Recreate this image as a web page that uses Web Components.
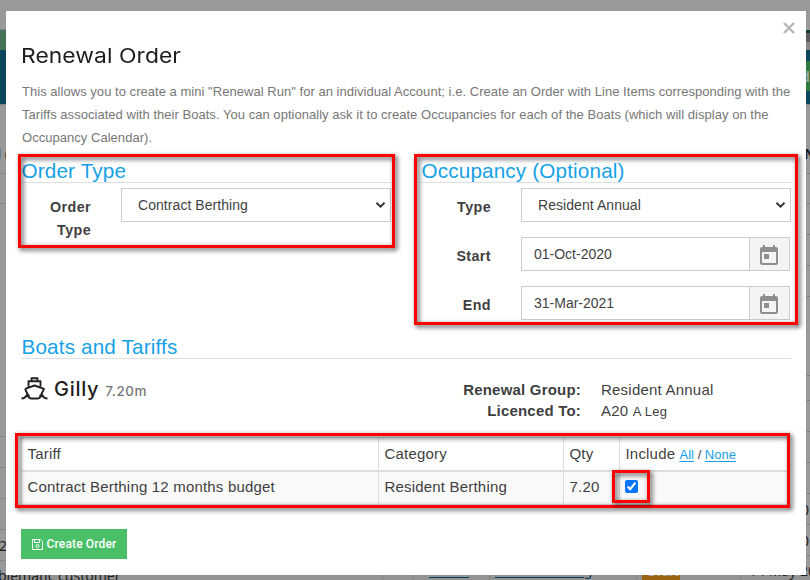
<!DOCTYPE html>
<html lang="en">
<head>
<meta charset="utf-8">
<title>Renewal Order</title>
<style>
html,body{margin:0;height:100%;overflow:hidden;background:#999}
body{font-family:"Liberation Sans",Arial,sans-serif;color:#3f3f3f}
</style>
</head>
<body>
<renewal-app></renewal-app>
<script>
const define=(name,html,setup)=>customElements.define(name,class extends HTMLElement{
  constructor(){
    super();
    const t=document.createElement('template');
    t.innerHTML=html;
    this.attachShadow({mode:'open'}).append(t.content.cloneNode(true));
  }
  connectedCallback(){ if(setup) setup(this,this.shadowRoot); }
});

/* dimmed page behind the dialog */
define('page-backdrop',`<style>
:host{position:absolute;inset:0;overflow:hidden;background:#999;z-index:0}
div,span{position:absolute;white-space:nowrap}
.l{left:0;width:6px;height:1px;background:#858585}
.r{right:0;width:4px;height:1px;background:#808080}
.v{top:575px;width:1px;height:5px;background:#858585}
span{font-size:14px;line-height:16px;color:#1f1f1f;font-family:"Noto Sans","Open Sans",sans-serif}
.u{color:#0b4058;text-decoration:underline;text-underline-offset:2px}
</style>
<div style="left:0;top:30px;width:6px;height:20px;background:#467159"></div>
<div style="right:0;top:30px;width:4px;height:20px;background:linear-gradient(#123e2b 0 3px,#5c5c60 3px 12px,#8a8588 12px)"></div>
<div style="left:0;right:0;top:50px;height:54px;background:#0a465c"></div>
<div style="right:0;top:61px;width:4px;height:30px;background:#2e7a3f"></div>
<span style="left:801px;top:69px;color:#a5a5a5;font-weight:600">d</span>
<div style="left:0;top:29px;width:6px;height:1px;background:#868686"></div>
<div style="left:0;right:0;top:104px;height:1px;background:#828282"></div>
<span style="left:-3px;top:146px;font-weight:700">l (</span>
<span style="left:804px;top:146px;font-weight:700">N</span>
<div id="rows"></div>
<span style="left:-1px;top:538px">2</span>
<span style="left:801px;top:502px">0</span>
<span style="left:801px;top:533px">0</span>
<div style="left:0;right:0;top:575px;height:5px;background:#939393"></div>
<div class="v" style="left:382px"></div><div class="v" style="left:413px"></div><div class="v" style="left:489px"></div><div class="v" style="left:636px"></div><div class="v" style="left:740px"></div>
<span style="left:-2px;top:568px">blematic customer</span>
<span class="u" style="left:429px;top:562px">76543</span>
<span class="u" style="left:495px;top:562px;letter-spacing:-.35px">Visitor Berthing</span>
<div style="left:642px;top:575px;width:38px;height:5px;background:#9a6413"></div>
<span style="left:648px;top:564px;font-size:12px;color:#aaa;font-weight:700">Draft</span>
<span style="left:749px;top:563px">14 May 20</span>`,(h,r)=>{
  const box=r.getElementById('rows');box.style.cssText='inset:0';
  for(const y of [173,203,436,467,498,529,560])box.insertAdjacentHTML('beforeend',`<div class="l" style="top:${y}px"></div>`);
  for(const y of [173,203,234,265,296,375,400,431,462,493,524,555])box.insertAdjacentHTML('beforeend',`<div class="r" style="top:${y}px"></div>`);
});

define('modal-dialog',`<style>
:host{position:absolute;left:6px;top:11px;width:800px;height:564px;box-sizing:border-box;padding:31px 15px 0;background:#fff;z-index:1}
button{position:absolute;right:9px;top:9px;width:16px;height:16px;padding:0;border:0;background:none}
svg{display:block;width:16px;height:16px}
</style><button aria-label="Close"><svg viewBox="0 0 16 16"><path d="M3 3l10 10M13 3l-10 10" stroke="#b8b8b8" stroke-width="2.400" fill="none"/></svg></button><slot></slot>`);

define('modal-title',`<style>
:host{display:block;height:38px}
h1{margin:0;font:400 20.500px/28px Inter,sans-serif;letter-spacing:.05px;color:#1d1d1d;white-space:nowrap;transform:scaleX(1.115);transform-origin:0 0}
</style><h1><slot></slot></h1>`);

define('intro-text',`<style>
:host{display:block;height:80px;font-size:13px;line-height:23px;letter-spacing:.035px;color:#777;white-space:nowrap}
::slotted(p){padding-left:1px}
</style><slot></slot>`);

define('section-title',`<style>
:host{display:block;height:22px;border-bottom:1px solid #e0e0e0;margin-bottom:5px}
h2{margin:0;padding-left:.500px;font:400 20.700px/22px "Liberation Sans",Arial,sans-serif;letter-spacing:.15px;color:#16a1e7;white-space:nowrap}
</style><h2><slot></slot></h2>`);

define('form-row',`<style>
:host{display:grid;grid-template-columns:70px 270px;column-gap:30px;height:49px}
label{font-weight:700;font-size:14.300px;line-height:23px;letter-spacing:.4px;text-align:right;padding-top:8px;color:#3f3f3f}
</style><label></label><slot></slot>`,(h,r)=>{r.querySelector('label').textContent=h.getAttribute('label')});

define('select-box',`<style>
:host{display:flex;align-items:center;justify-content:space-between;box-sizing:border-box;width:270px;height:34px;border:1px solid #ccc;padding:0 4px 0 16px;font-size:14px;letter-spacing:.06px;color:#3f3f3f;background:#fff}
svg{width:11px;height:8px}
</style><span><slot></slot></span><svg viewBox="0 0 11 8"><path d="M1.500 1.800L5.500 5.600L9.500 1.800" fill="none" stroke="#333" stroke-width="2"/></svg>`);

define('date-box',`<style>
:host{display:flex;box-sizing:border-box;width:269px;height:34px;border:1px solid #ccc;font-size:14px;color:#3f3f3f;background:#fff}
span{flex:1;padding-left:12px;line-height:32px}
div{width:39px;border-left:1px solid #ccc;background:#f4f4f4;display:flex;align-items:center;justify-content:center}
svg{width:18px;height:20px;margin:2px 2px 0 0}
</style><span><slot></slot></span><div><svg viewBox="0 0 18 20"><path fill="#8f8f8f" fill-rule="evenodd" d="M3 0h2v2h8V0h2v2h1q2 0 2 2v14q0 2-2 2H2q-2 0-2-2V4q0-2 2-2h1zM2 7v11h14V7zM4 9h5v5H4z"/></svg></div>`);

define('boat-head',`<style>
:host{display:grid;grid-template-columns:1fr 118px 190px;column-gap:20px;height:73px}
.n{display:flex;align-items:baseline;padding-top:10px;font-family:Inter,sans-serif;white-space:nowrap}
svg{width:27px;height:23px;align-self:flex-start;margin:3px 6px 0 0}
b{font-weight:500;font-size:20px;line-height:30px;letter-spacing:.7px;color:#1d1d1d}
small{font-size:13.500px;color:#777;margin-left:6px;letter-spacing:.55px;font-weight:500}
.k,.v{font-size:15px;line-height:21px;padding-top:15px;white-space:nowrap}
.k{font-weight:700;text-align:right;letter-spacing:.2px;display:flex;flex-direction:column;align-items:flex-end}
.v{letter-spacing:.22px}
i{font-style:normal;font-size:13px}
</style>
<div class="n"><svg viewBox="0 0 27 23"><g fill="none" stroke="#222" stroke-width="1.900"><path d="M10.500 4V1.200h6V4M7.500 9.500V4.200h12v5.300M4 11.800L13.500 8.500L23 11.800L20 18L18.500 19.500M4 11.800L7 18L8.500 19.500" stroke-linejoin="round"/><path d="M.5 21.500q3.500 0 5.500-3.500q2.300 3.500 4.500 3.500h6q2.200 0 4.500-3.500q2 3.500 5.500 3.500"/></g></svg><b>Gilly</b><small>7.20m</small></div>
<div class="k"><span>Renewal Group:</span><span>Licenced To:</span></div>
<div class="v"><div>Resident Annual</div><div>A20 <i>A Leg</i></div></div>`);

define('tariff-table',`<style>
:host{display:block;width:767px;height:92px}
.g{display:grid;grid-template-columns:357px 185px 56px 168px;border-left:1px solid #ddd;font-size:15px;letter-spacing:.19px}
.g>div{box-sizing:border-box;padding-left:5.500px;border-right:1px solid #ddd;white-space:nowrap}
.h>div{height:33px;line-height:31px;border-top:1px solid #ddd}
.h{border-bottom:2px solid #ddd}
.d{background:#f9f9f9;border-bottom:1px solid #ddd}
.d>div{height:32px;line-height:30px}
.q{font-size:13px;letter-spacing:0}
a{color:#16a1e7;text-decoration:underline;text-underline-offset:2px}
input{width:13px;height:13px;margin:8px 0 0 -.500px;display:block}
</style>
<div class="g h"><div>Tariff</div><div>Category</div><div>Qty</div><div>Include <span class="q"><a>All</a> / <a>None</a></span></div></div>
<div class="g d"><div>Contract Berthing 12 months budget</div><div>Resident Berthing</div><div>7.20</div><div><input type="checkbox" checked></div></div>`);

define('save-button',`<style>
:host{display:flex;align-items:center;justify-content:center;box-sizing:border-box;width:106px;height:30px;background:#49bf67;color:#fff;font:500 12px/30px Roboto,sans-serif;letter-spacing:.15px;white-space:nowrap}
svg{width:11px;height:11px;margin-right:4px}
</style><svg viewBox="0 0 11 11"><path d="M.5.500h8l2 2v8H.500zM2.500.500v3h5v-3" fill="none" stroke="#fff"/><circle cx="5.500" cy="7" r="1.500" fill="none" stroke="#fff"/></svg><slot></slot>`);

/* red annotation frame */
define('mark-box',`<style>
:host{position:absolute;box-sizing:border-box;border:3px solid #fe0000;filter:drop-shadow(2px 2px 2.500px rgba(0,0,0,.75));z-index:2;pointer-events:none}
</style>`,h=>{
  const [x,y,w,t]=h.getAttribute('box').split(' ');
  h.style.cssText=`left:${x}px;top:${y}px;width:${w}px;height:${t}px`;
});

define('renewal-app',`<style>
:host{position:relative;display:block;width:810px;height:580px;overflow:hidden}
.cols{display:grid;grid-template-columns:370px 370px;column-gap:30px;height:176px}
p{margin:0}
</style>
<page-backdrop></page-backdrop>
<modal-dialog>
<modal-title>Renewal Order</modal-title>
<intro-text><p>This allows you to create a mini "Renewal Run" for an individual Account; i.e. Create an Order with Line Items corresponding with the</p><p>Tariffs associated with their Boats. You can optionally ask it to create Occupancies for each of the Boats (which will display on the</p><p>Occupancy Calendar).</p></intro-text>
<div class="cols">
<div><section-title>Order Type</section-title><form-row label="Order Type"><select-box>Contract Berthing</select-box></form-row></div>
<div><section-title>Occupancy (Optional)</section-title><form-row label="Type"><select-box>Resident Annual</select-box></form-row><form-row label="Start"><date-box>01-Oct-2020</date-box></form-row><form-row label="End"><date-box>31-Mar-2021</date-box></form-row></div>
</div>
<section-title>Boats and Tariffs</section-title>
<boat-head></boat-head>
<tariff-table></tariff-table>
<save-button>Create Order</save-button>
</modal-dialog>
<mark-box box="18 154 377 94"></mark-box>
<mark-box box="414 154 384 171"></mark-box>
<mark-box box="15 433 775 75"></mark-box>
<mark-box box="612 470 38 33"></mark-box>`);
</script>
</body>
</html>
